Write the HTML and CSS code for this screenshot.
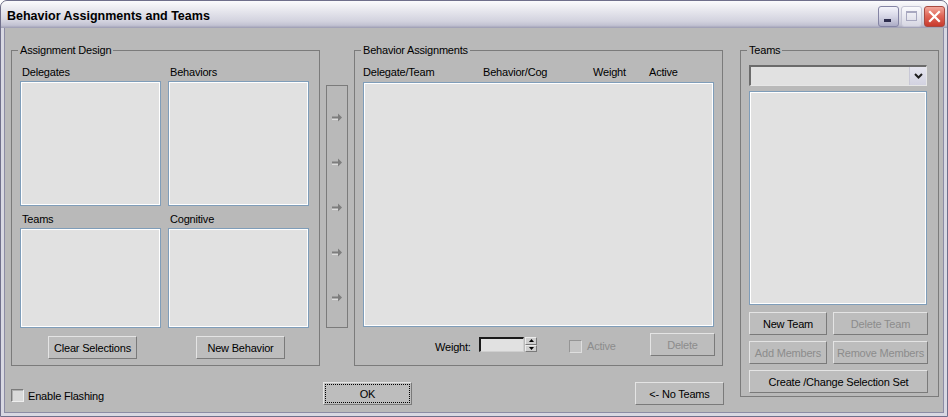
FILE: index.html
```html
<!DOCTYPE html>
<html lang="en">
<head>
    <meta charset="UTF-8">
    <title>Behavior Assignments and Teams</title>
    <link rel="stylesheet" href="styles.css">
</head>
<body>

    <div class="window">

        <!-- Title bar -->
        <div class="titlebar">
            <span class="title">Behavior Assignments and Teams</span>
            <div class="controls">
                <span class="ctl ctl-min"><span class="min-bar"></span></span>
                <span class="ctl ctl-max"><span class="max-box"></span></span>
                <span class="ctl ctl-close">
                    <svg width="13" height="13" viewBox="0 0 13 13">
                        <path d="M2 2l9 9M11 2l-9 9" stroke="#fff" stroke-width="2.2" stroke-linecap="square"/>
                    </svg>
                </span>
            </div>
        </div>

        <!-- Client area -->
        <div class="client">

            <div class="main">
                <div class="top-row">

                    <fieldset class="group group-design">
                        <legend>Assignment Design</legend>
                        <div class="design-grid">
                            <div class="cell">
                                <div class="field-label">Delegates</div>
                                <div class="listbox list-tall"></div>
                            </div>
                            <div class="cell">
                                <div class="field-label">Behaviors</div>
                                <div class="listbox list-tall"></div>
                            </div>
                            <div class="cell">
                                <div class="field-label">Teams</div>
                                <div class="listbox list-short"></div>
                            </div>
                            <div class="cell">
                                <div class="field-label">Cognitive</div>
                                <div class="listbox list-short"></div>
                            </div>
                            <button class="btn btn-wide">Clear Selections</button>
                            <button class="btn btn-wide">New Behavior</button>
                        </div>
                    </fieldset>

                    <div class="arrow-col">
                        <svg class="arrow" width="11" height="9" viewBox="0 0 11 9"><path d="M0 5.5h6v1H0z" fill="#fff"/><path d="M0 3.5h6v2H0zM6 0.5l4 4-4 4z" fill="#7d7d7d"/></svg>
                        <svg class="arrow" width="11" height="9" viewBox="0 0 11 9"><path d="M0 5.5h6v1H0z" fill="#fff"/><path d="M0 3.5h6v2H0zM6 0.5l4 4-4 4z" fill="#7d7d7d"/></svg>
                        <svg class="arrow" width="11" height="9" viewBox="0 0 11 9"><path d="M0 5.5h6v1H0z" fill="#fff"/><path d="M0 3.5h6v2H0zM6 0.5l4 4-4 4z" fill="#7d7d7d"/></svg>
                        <svg class="arrow" width="11" height="9" viewBox="0 0 11 9"><path d="M0 5.5h6v1H0z" fill="#fff"/><path d="M0 3.5h6v2H0zM6 0.5l4 4-4 4z" fill="#7d7d7d"/></svg>
                        <svg class="arrow" width="11" height="9" viewBox="0 0 11 9"><path d="M0 5.5h6v1H0z" fill="#fff"/><path d="M0 3.5h6v2H0zM6 0.5l4 4-4 4z" fill="#7d7d7d"/></svg>
                    </div>

                    <fieldset class="group group-assign">
                        <legend>Behavior Assignments</legend>
                        <div class="col-heads">
                            <span class="head-delegate">Delegate/Team</span>
                            <span class="head-behavior">Behavior/Cog</span>
                            <span class="head-weight">Weight</span>
                            <span>Active</span>
                        </div>
                        <div class="listbox list-assign"></div>
                        <div class="assign-controls">
                            <span class="weight-label">Weight:</span>
                            <input type="text" class="spin-input">
                            <span class="spinner">
                                <span class="spin-half"><svg width="5" height="3" viewBox="0 0 5 3"><path d="M2.5 0L5 3H0z" fill="#000"/></svg></span>
                                <span class="spin-half"><svg width="5" height="3" viewBox="0 0 5 3"><path d="M0 0h5L2.5 3z" fill="#000"/></svg></span>
                            </span>
                            <input type="checkbox" class="check check-off" disabled>
                            <span class="check-text disabled">Active</span>
                            <button class="btn btn-delete disabled">Delete</button>
                        </div>
                    </fieldset>

                </div>

                <div class="bottom-row">
                    <label class="flash-toggle">
                        <input type="checkbox" class="check">
                        <span class="check-text">Enable Flashing</span>
                    </label>
                    <button class="btn btn-wide btn-default">OK</button>
                    <button class="btn btn-wide btn-noteams">&lt;- No Teams</button>
                </div>
            </div>

            <fieldset class="group group-teams">
                <legend>Teams</legend>
                <div class="combo">
                    <span class="combo-btn">
                        <svg width="9" height="6" viewBox="0 0 9 6"><path d="M1 1l3.5 3.5L8 1" stroke="#1e1e1e" stroke-width="2" fill="none"/></svg>
                    </span>
                </div>
                <div class="listbox list-teams"></div>
                <div class="team-buttons">
                    <button class="btn">New Team</button>
                    <button class="btn disabled">Delete Team</button>
                    <button class="btn disabled">Add Members</button>
                    <button class="btn disabled">Remove Members</button>
                    <button class="btn btn-span">Create /Change Selection Set</button>
                </div>
            </fieldset>

        </div>
    </div>

</body>
</html>
```

FILE: styles.css
```css
/* Base */
body {
    margin: 0;
    background: #fff;
    font-family: "Liberation Sans", Arial, sans-serif;
    font-size: 11px;
    letter-spacing: -0.2px;
    color: #000;
}

/* Window frame */
.window {
    width: 948px;
    height: 417px;
    box-sizing: border-box;
    border: 1px solid #6f6f8b;
    border-radius: 7px 7px 0 0;
    display: flex;
    flex-direction: column;
    overflow: hidden;
    background: #b9b9b9;
}

.titlebar {
    height: 27px;
    flex: none;
    display: flex;
    align-items: center;
    padding: 0 2px 0 6px;
    background: linear-gradient(to bottom, #fbfbfd 0%, #f2f2f6 15%, #e2e2ea 45%, #d2d2de 75%, #c2c2d2 90%, #9c9cb2 100%);
}

.title {
    flex: 1;
    font-weight: bold;
    font-size: 12.5px;
    letter-spacing: 0;
    color: #000;
    margin-top: 2px;
}

.controls {
    display: flex;
    gap: 2px;
    margin-top: 3px;
}

.ctl {
    width: 21px;
    height: 21px;
    box-sizing: border-box;
    border-radius: 3px;
    display: flex;
    align-items: center;
    justify-content: center;
}

.ctl-min {
    border: 1px solid #8484a4;
    background: linear-gradient(to bottom, #f4f4fb, #d6d6e6 50%, #acacc6);
    align-items: flex-end;
    justify-content: flex-start;
}

.min-bar {
    width: 7px;
    height: 3px;
    background: #2e2e4e;
    margin: 0 0 4px 5px;
}

.ctl-max {
    border: 1px solid #c4c4d4;
    background: linear-gradient(to bottom, #fafafd, #e8e8f0 50%, #d6d6e2);
}

.max-box {
    width: 9px;
    height: 7px;
    border: 1px solid #a8a8c0;
    border-top-width: 2px;
}

.ctl-close {
    border: 1px solid #a84a40;
    background: linear-gradient(to bottom, #f2a89c, #e0685a 45%, #c83a2e);
}

/* Client area */
.client {
    flex: 1;
    display: flex;
    align-items: flex-start;
    gap: 16px;
    padding: 15px 5px 0 7px;
    border: 3px solid #d8d8e2;
    border-top: none;
    box-shadow: inset 1px 0 #8c8ca4, inset -1px 0 #8c8ca4, inset 0 -1px #8c8ca4;
}

.main {
    width: 713px;
    display: flex;
    flex-direction: column;
}

.top-row {
    display: flex;
    align-items: flex-start;
}

/* Group boxes */
.group {
    margin: 0;
    border: 1px solid #7b7b7b;
    padding: 8px 10px 6px 8px;
    min-width: 0;
}

.group legend {
    padding: 0 2px;
    margin-left: -2px;
    line-height: 14px;
}

.group-design {
    width: 309px;
    box-sizing: border-box;
}

.design-grid {
    display: grid;
    grid-template-columns: 141px 141px;
    column-gap: 7px;
    row-gap: 6px;
}

.field-label {
    line-height: 14px;
    margin-bottom: 2px;
    padding-left: 2px;
}

.listbox {
    box-sizing: border-box;
    background: #e1e1e1;
    border: 1px solid #7f9db9;
    box-shadow: inset 0 0 0 1px #fff;
}

.list-tall {
    height: 125px;
}

.list-short {
    height: 100px;
}

/* Arrow buttons */
.arrow-col {
    width: 22px;
    height: 243px;
    box-sizing: border-box;
    margin: 42px 6px 0 6px;
    padding-top: 27px;
    border: 1px solid #7b7b7b;
    display: flex;
    flex-direction: column;
    align-items: center;
    gap: 36px;
}

.arrow {
    display: block;
}

/* Behavior assignments */
.group-assign {
    width: 369px;
    box-sizing: border-box;
    padding: 8px 8px 9px 8px;
}

.col-heads {
    display: flex;
    line-height: 14px;
    margin-bottom: 3px;
}

.head-delegate {
    width: 120px;
}

.head-behavior {
    width: 110px;
}

.head-weight {
    width: 56px;
}

.list-assign {
    width: 351px;
    height: 245px;
}

.assign-controls {
    display: flex;
    align-items: center;
    height: 23px;
    margin-top: 6px;
}

.weight-label {
    width: 44px;
    margin-left: 72px;
    margin-top: 4px;
}

.spin-input {
    width: 45px;
    height: 15px;
    box-sizing: border-box;
    margin: 0;
    padding: 0;
    border-style: solid;
    border-width: 2px 1px 1px 2px;
    border-color: #1a1a1a #cfcfcf #cfcfcf #1a1a1a;
    background: #e1e1e1;
}

.spinner {
    width: 12px;
    height: 15px;
    margin-left: 1px;
    display: flex;
    flex-direction: column;
}

.spin-half {
    flex: 1;
    box-sizing: border-box;
    display: flex;
    align-items: center;
    justify-content: center;
    background: #cfcfcf;
    border: 1px solid;
    border-color: #ececec #7a7a7a #7a7a7a #ececec;
}

.check {
    appearance: none;
    -webkit-appearance: none;
    width: 13px;
    height: 13px;
    margin: 0;
    box-sizing: border-box;
    border: 1px solid;
    border-color: #7a7a7a #eeeeee #eeeeee #7a7a7a;
    background: #dadada;
    box-shadow: inset 1px 1px #b0b0b0;
}

.check-off {
    margin-left: 32px;
    margin-top: 3px;
    border-color: #959595 #dedede #dedede #959595;
    background: #c4c4c4;
    box-shadow: none;
}

.check-text {
    margin-left: 5px;
    margin-top: 3px;
}

.disabled {
    color: #8c8c8c;
}

/* Buttons */
.btn {
    height: 23px;
    box-sizing: border-box;
    margin: 0;
    padding: 0;
    border: 1px solid;
    border-color: #e4e4e4 #7a7a7a #7a7a7a #e4e4e4;
    background: #bdbdbd;
    font: inherit;
    letter-spacing: -0.2px;
    color: #000;
}

.btn.disabled {
    color: #8c8c8c;
}

.btn-wide {
    width: 89px;
}

.design-grid .btn {
    justify-self: center;
    margin-top: 2px;
    margin-left: 4px;
}

.assign-controls .btn-delete {
    width: 65px;
    margin-left: auto;
    margin-right: -1px;
}

.btn-default {
    outline: 1px dotted #000;
    outline-offset: -3px;
}

/* Bottom row */
.bottom-row {
    display: flex;
    align-items: center;
    margin-top: 16px;
}

.flash-toggle {
    width: 312px;
    display: flex;
    align-items: center;
    padding-top: 4px;
}

.flash-toggle .check-text {
    margin-left: 4px;
    margin-top: 0;
}

.bottom-row .btn-noteams {
    margin-left: auto;
}

/* Teams */
.group-teams {
    width: 199px;
    box-sizing: border-box;
    padding: 8px 10px 3px 8px;
}

.combo {
    width: 178px;
    height: 21px;
    box-sizing: border-box;
    display: flex;
    border-style: solid;
    border-width: 2px 1px 1px 2px;
    border-color: #6b6b6b #e6e6e6 #e6e6e6 #6b6b6b;
    background: #e1e1e1;
}

.combo-btn {
    margin-left: auto;
    width: 16px;
    display: flex;
    align-items: center;
    justify-content: center;
    background: linear-gradient(to bottom, #e6e6f0, #d2d2e0);
    border-left: 1px solid #c8c8d6;
}

.list-teams {
    width: 178px;
    height: 214px;
    margin-top: 5px;
}

.team-buttons {
    display: grid;
    grid-template-columns: 78px 95px;
    column-gap: 6px;
    row-gap: 6px;
    margin-top: 7px;
}

.btn-span {
    grid-column: span 2;
}
```
